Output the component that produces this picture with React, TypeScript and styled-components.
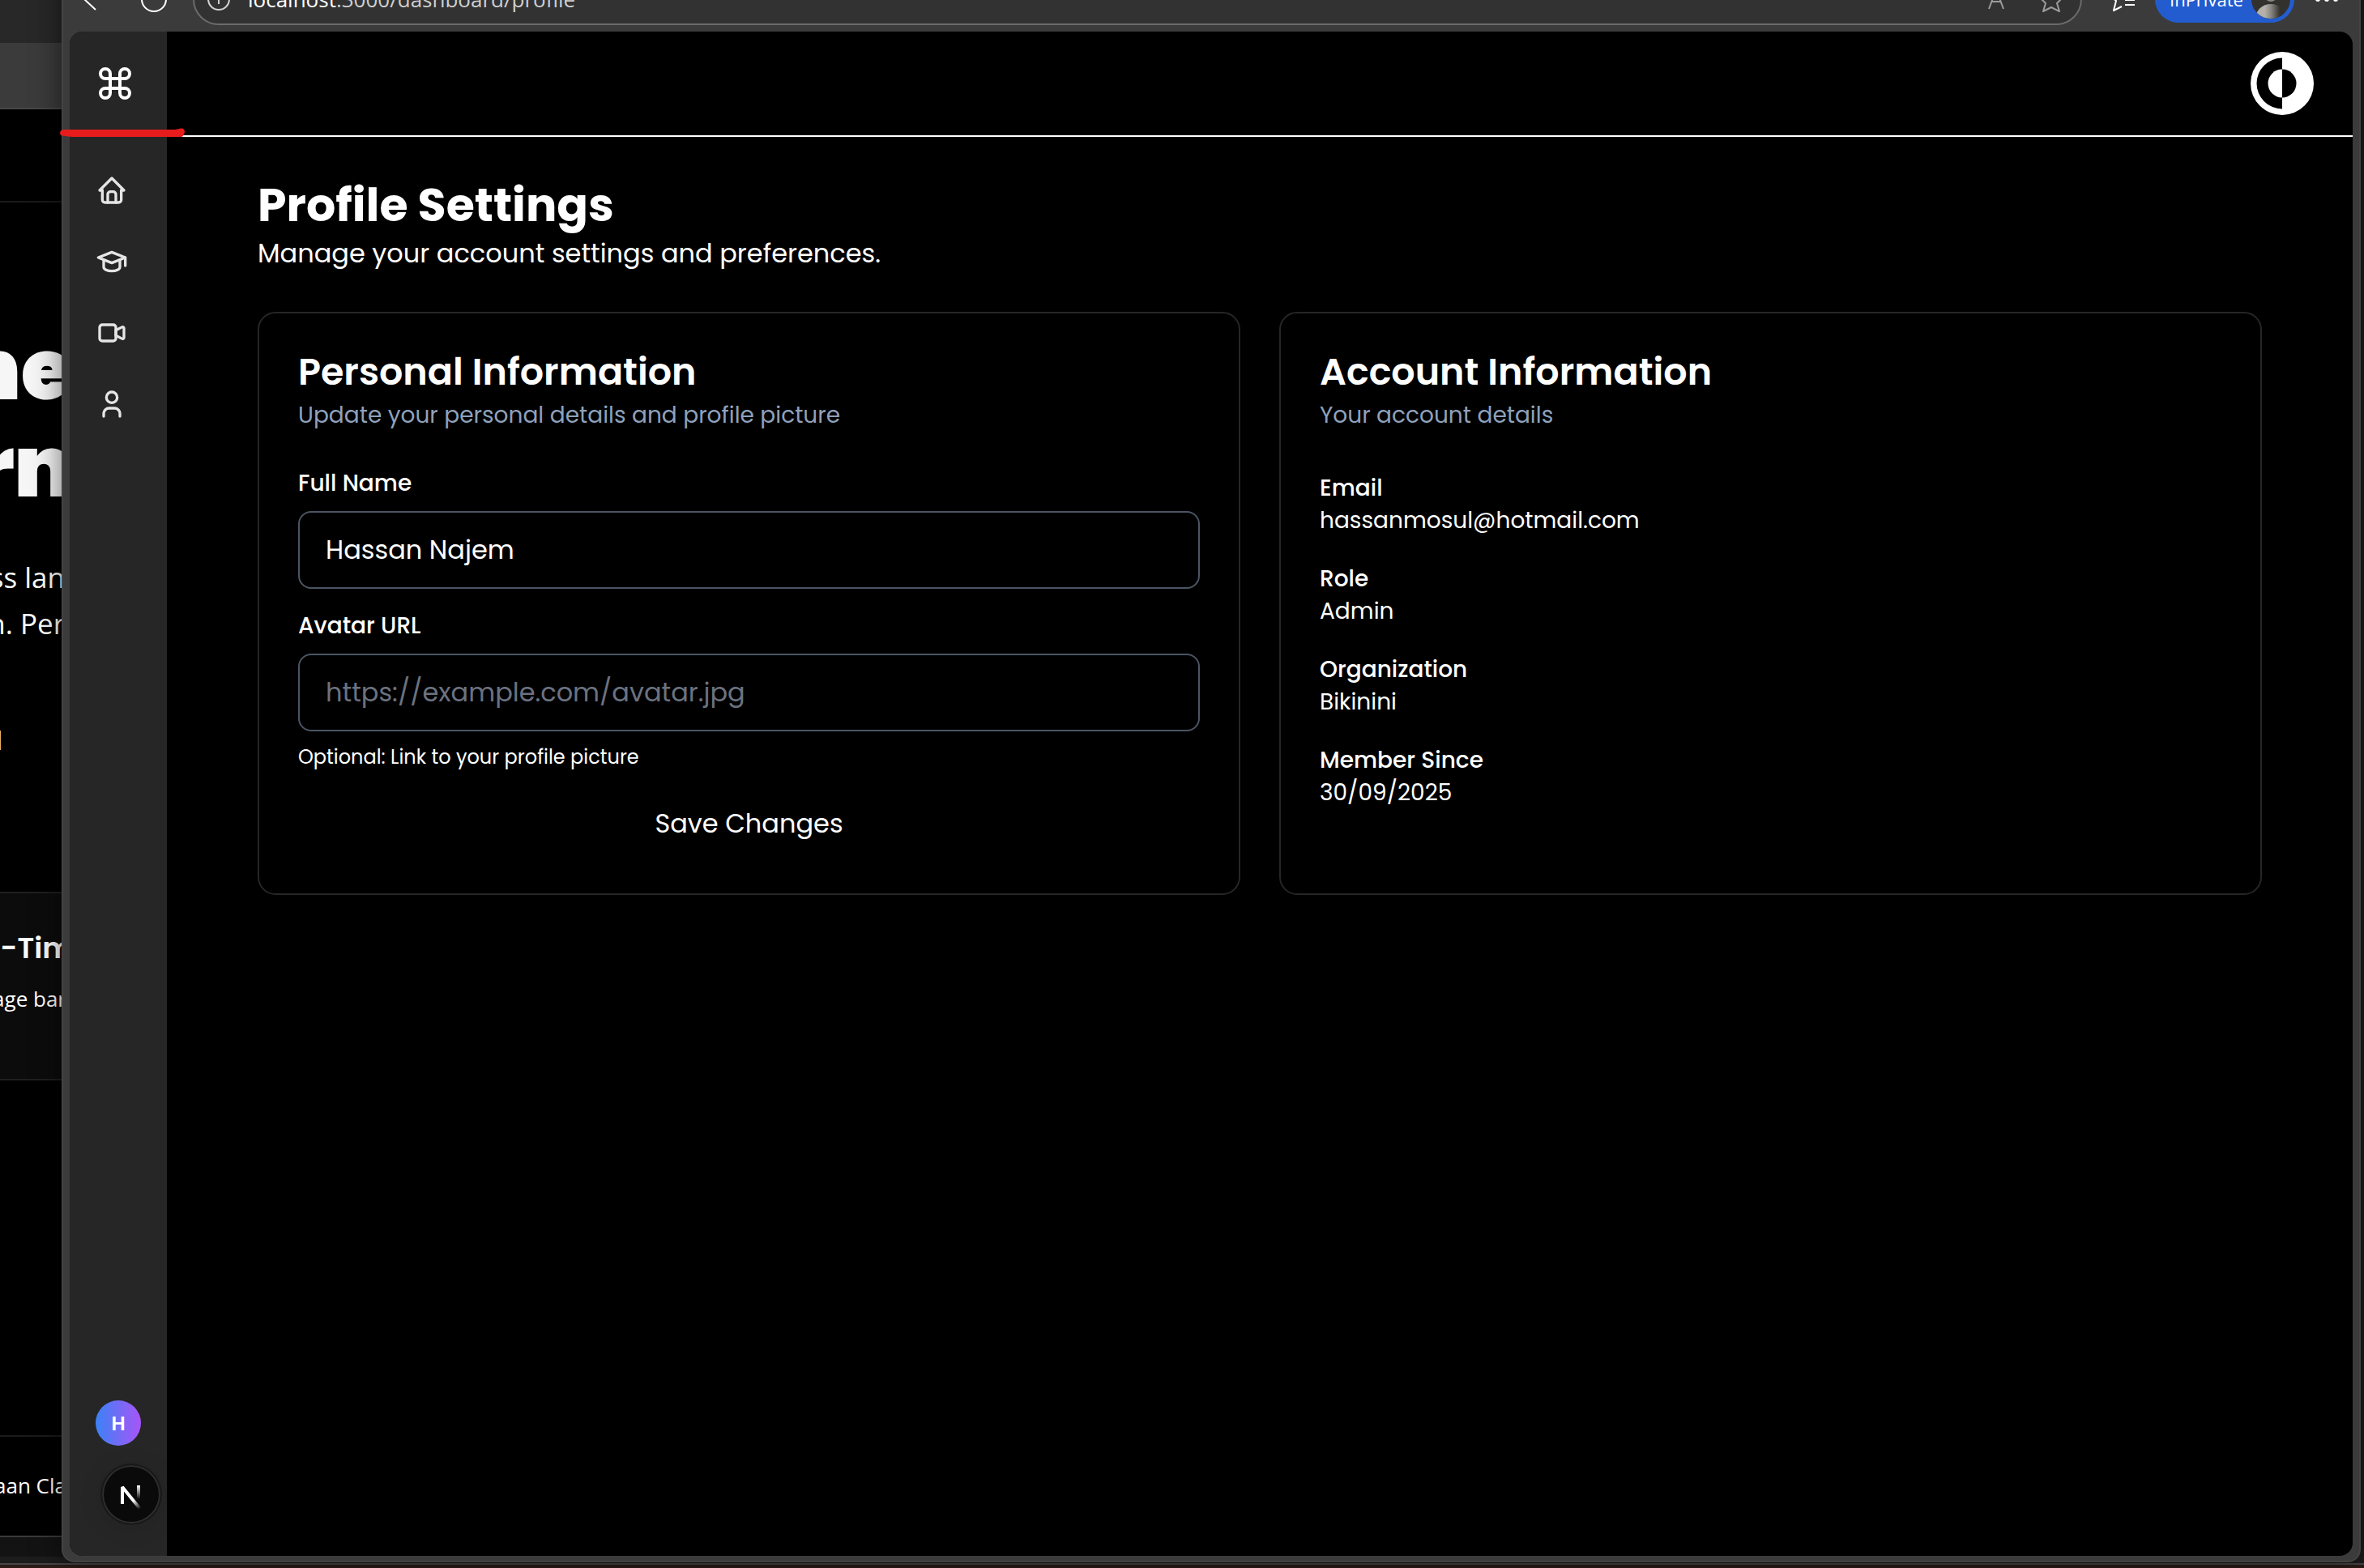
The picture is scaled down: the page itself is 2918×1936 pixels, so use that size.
import React, { useState } from "react";
import styled, { createGlobalStyle } from "styled-components";
import { Command } from "lucide-react";

const sans = `Poppins, Inter, "Open Sans", sans-serif`;
const system = `"Segoe UI", "Open Sans", "Noto Sans", sans-serif`;

const GlobalStyle = createGlobalStyle`
  *, *::before, *::after { box-sizing: border-box; }
  body { margin: 0; background: #1c1c1c; }
  h1, h2, h3, p, dl, dd, ul { margin: 0; padding: 0; }
  button, input { font: inherit; }
`;

const Desktop = styled.div`
  position: relative;
  height: 100vh;
  overflow: hidden;
  background: #1c1c1c;
  color: #fff;
  font-family: ${sans};
`;

const Taskbar = styled.div`
  position: absolute;
  left: 0;
  right: 0;
  bottom: 0;
  height: 6px;
  background: #2c1c17;
  border-top: 2px solid #474747;
`;

/* ---------- window behind ---------- */

const RearWindow = styled.section`
  position: absolute;
  top: 0;
  left: 0;
  bottom: 14px;
  width: 90px;
  overflow: hidden;
  display: flex;
  flex-direction: column;
  background: #131313;
`;

const RearTabs = styled.div`
  flex: none;
  height: 53px;
  background: #282828;
`;

const RearToolbar = styled.div`
  flex: none;
  height: 82px;
  background: #3b3b3b;
  border-bottom: 2px solid #474747;
`;

const RearPage = styled.div`
  flex: 1;
  margin-bottom: 24px;
  display: flex;
  flex-direction: column;
  background: #000;
  border-bottom: 2px solid #3a3a3a;
`;

const RearNav = styled.div`
  flex: none;
  height: 115px;
  border-bottom: 2px solid #1a1a1a;
`;

const RearLine = styled.p<{ $size: number; $line: number; $weight?: number; $inset?: number }>`
  display: flex;
  justify-content: flex-end;
  padding-right: ${(p) => p.$inset ?? 0}px;
  font-family: ${(p) => (p.$weight ? sans : system)};
  font-size: ${(p) => p.$size}px;
  font-weight: ${(p) => p.$weight ?? 400};
  line-height: ${(p) => p.$line}px;
  white-space: pre;
`;

const RearHeading = styled.div`
  padding: 147px 0 47px;
  color: #f6f6f6;
`;

const RearAccent = styled.div`
  width: 1px;
  height: 24px;
  margin-top: 104px;
  background: #e8b060;
`;

const RearCard = styled.div`
  flex: none;
  height: 233px;
  margin-top: 175px;
  padding-top: 44px;
  display: flex;
  flex-direction: column;
  gap: 18px;
  background: #0c0c0c;
  border: 2px solid #1f1f1f;
  border-width: 2px 0;
`;

const RearFooter = styled.div`
  margin-top: auto;
  height: 124px;
  padding-top: 40px;
  border-top: 2px solid #1a1a1a;
`;

/* ---------- browser window ---------- */

const Browser = styled.section`
  position: absolute;
  top: -41px;
  left: 76px;
  right: 4px;
  bottom: 7px;
  display: flex;
  flex-direction: column;
  padding: 0 8px 6px;
  background: #3b3b3b;
  border: 2px solid #434343;
  border-top: 0;
  border-radius: 0 0 16px 16px;
  box-shadow: 0 0 36px rgba(0, 0, 0, 0.55);
`;

const Toolbar = styled.header`
  flex: none;
  height: 80px;
  display: flex;
  align-items: center;
  gap: 20px;
  padding: 0 12px 0 4px;
`;

const ToolButton = styled.button`
  flex: none;
  display: flex;
  padding: 0;
  border: 0;
  background: none;
  color: #fff;
`;

const ToolGroup = styled.div<{ $gap: number }>`
  display: flex;
  gap: ${(p) => p.$gap}px;
`;

const AddressBar = styled.div`
  flex: 1;
  height: 64px;
  margin: 0 10px 0 8px;
  padding: 0 16px;
  display: flex;
  align-items: center;
  gap: 22px;
  background: #323232;
  border: 2px solid #6b6b6b;
  border-radius: 32px;
  color: #9c9c9c;
`;

const Address = styled.span`
  flex: 1;
  font-family: ${system};
  font-size: 26px;
  line-height: 36px;
  color: #cfcfcf;
  b { font-weight: 400; color: #fff; }
`;

const PrivateBadge = styled.button`
  flex: none;
  width: 172px;
  height: 58px;
  display: flex;
  align-items: center;
  justify-content: space-between;
  padding: 0 5px 0 18px;
  border: 0;
  border-radius: 29px;
  background: #235ccf;
  color: #fff;
  font-family: ${system};
  font-size: 22px;
`;

const Viewport = styled.div`
  flex: 1;
  min-height: 0;
  position: relative;
  display: flex;
  overflow: hidden;
  border-radius: 16px;
  background: #000;
`;

/* ---------- dashboard ---------- */

const Sidebar = styled.aside`
  flex: none;
  width: 120px;
  display: flex;
  flex-direction: column;
  align-items: flex-start;
  padding: 0 32px 136px;
  background: #262626;
`;

const Logo = styled.a`
  display: flex;
  align-items: center;
  height: 128px;
  color: #fff;
`;

const Nav = styled.nav`
  flex: 1;
  display: flex;
  flex-direction: column;
  margin-top: 24px;
`;

const NavLink = styled.a`
  display: flex;
  align-items: center;
  height: 88px;
  color: #e5e5e5;
`;

const Avatar = styled.button`
  width: 56px;
  height: 56px;
  padding: 0;
  border: 0;
  border-radius: 50%;
  background: linear-gradient(90deg, #3b82f6, #a855f7);
  color: #fff;
  font-size: 24px;
  font-weight: 600;
`;

const DevBadge = styled.button`
  position: absolute;
  left: 40px;
  bottom: 40px;
  width: 72px;
  height: 72px;
  padding: 0;
  display: flex;
  border: 0;
  border-radius: 50%;
  background: #0a0a0a;
  box-shadow: inset 0 0 0 2px #2e2e2e, 0 0 0 2px #191919, 0 4px 32px rgba(0, 0, 0, 0.12);
`;

const Main = styled.div`
  flex: 1;
  min-width: 0;
`;

const TopBar = styled.header`
  height: 130px;
  display: flex;
  align-items: center;
  justify-content: flex-end;
  padding: 0 48px;
  border-bottom: 2px solid #fff;
`;

const ThemeToggle = styled.button`
  display: flex;
  padding: 0;
  border: 0;
  background: none;
  color: #fff;
`;

const Content = styled.main`
  padding: 48px 112px;
`;

const PageTitle = styled.h1`
  font-size: 57px;
  font-weight: 700;
  line-height: 72px;
`;

const Lead = styled.p`
  font-size: 32px;
  line-height: 48px;
`;

const Cards = styled.div`
  display: grid;
  grid-template-columns: 1fr 1fr;
  gap: 48px;
  margin-top: 48px;
`;

const Card = styled.section`
  padding: 48px;
  border: 2px solid #262626;
  border-radius: 22px;
`;

const CardHeader = styled.header`
  display: flex;
  flex-direction: column;
  gap: 10px;
  margin-bottom: 44px;
`;

const CardTitle = styled.h2`
  font-size: 46px;
  font-weight: 600;
  line-height: 48px;
`;

const CardText = styled.p`
  font-size: 28px;
  line-height: 40px;
  color: #8fa1bb;
`;

const Form = styled.form`
  display: flex;
  flex-direction: column;
  gap: 26px;
`;

const Field = styled.div`
  display: flex;
  flex-direction: column;
  gap: 14px;
`;

const Label = styled.label`
  font-size: 28px;
  font-weight: 500;
  line-height: 40px;
`;

const Input = styled.input`
  width: 100%;
  height: 96px;
  padding: 0 32px;
  border: 2px solid #4b5563;
  border-radius: 16px;
  outline: 0;
  background: #000;
  color: #fff;
  font-size: 32px;
  &::placeholder { color: #6b7280; opacity: 1; }
`;

const Hint = styled.p`
  font-size: 24px;
  line-height: 36px;
`;

const Save = styled.button`
  height: 76px;
  padding: 0;
  border: 0;
  background: none;
  color: #fff;
  font-size: 32px;
`;

const Details = styled.dl`
  display: flex;
  flex-direction: column;
  gap: 32px;
  padding-top: 6px;
  font-size: 28px;
  line-height: 40px;
  dt { font-weight: 500; }
`;

/* ---------- annotation ---------- */

const Marker = styled.svg`
  position: absolute;
  left: 74px;
  top: 158px;
`;

const Outline = ({ children }: { children: React.ReactNode }) => (
  <svg width="40" height="40" viewBox="0 0 24 24" fill="none" stroke="currentColor" strokeWidth="2" strokeLinecap="round" strokeLinejoin="round">
    {children}
  </svg>
);

const nav = [
  {
    label: "Home",
    icon: (
      <>
        <path d="M5 12H3l9-9 9 9h-2" />
        <path d="M5 12v7a2 2 0 0 0 2 2h10a2 2 0 0 0 2-2v-7" />
        <path d="M9 21v-6a2 2 0 0 1 2-2h2a2 2 0 0 1 2 2v6" />
      </>
    ),
  },
  {
    label: "Courses",
    icon: (
      <>
        <path d="M22 9l-10-4-10 4 10 4 10-4v6" />
        <path d="M6 10.6V16a6 3 0 0 0 12 0v-5.4" />
      </>
    ),
  },
  {
    label: "Meetings",
    icon: (
      <>
        <path d="M15 10l4.553-2.276A1 1 0 0 1 21 8.618v6.764a1 1 0 0 1-1.447.894L15 14v-4z" />
        <rect x="3" y="6" width="12" height="12" rx="2" />
      </>
    ),
  },
  {
    label: "Profile",
    icon: (
      <>
        <circle cx="12" cy="7" r="4" />
        <path d="M6 21v-2a4 4 0 0 1 4-4h4a4 4 0 0 1 4 4v2" />
      </>
    ),
  },
];

const account = [
  ["Email", "hassanmosul@hotmail.com"],
  ["Role", "Admin"],
  ["Organization", "Bikinini"],
  ["Member Since", "30/09/2025"],
];

function RearBrowser() {
  return (
    <RearWindow>
      <RearTabs />
      <RearToolbar />
      <RearPage>
        <RearNav />
        <RearHeading>
          <RearLine $size={104} $line={120} $weight={900}>ne</RearLine>
          <RearLine $size={104} $line={120} $weight={900}>rn</RearLine>
        </RearHeading>
        <RearLine $size={35} $line={57} $inset={10}>ss lan</RearLine>
        <RearLine $size={35} $line={57} $inset={10}>n. Per</RearLine>
        <RearAccent />
        <RearCard>
          <RearLine $size={36} $line={48} $weight={600}>-Tim</RearLine>
          <RearLine $size={26} $line={40} $inset={8}>age bar</RearLine>
        </RearCard>
        <RearFooter>
          <RearLine $size={26} $line={40} $inset={8}>raan Cla</RearLine>
        </RearFooter>
      </RearPage>
    </RearWindow>
  );
}

function BrowserToolbar() {
  return (
    <Toolbar>
      <ToolGroup $gap={40}>
        <ToolButton aria-label="Back">
          <svg width="40" height="40" viewBox="0 0 40 40" fill="none" stroke="currentColor" strokeWidth="2">
            <path d="M28 33L14 20 28 7M14 20h24" />
          </svg>
        </ToolButton>
        <ToolButton aria-label="Refresh">
          <svg width="40" height="40" viewBox="0 0 40 40" fill="none" stroke="currentColor" strokeWidth="2">
            <circle cx="20" cy="20" r="15" />
          </svg>
        </ToolButton>
      </ToolGroup>
      <AddressBar>
        <svg width="28" height="28" viewBox="0 0 28 28" fill="none" stroke="#cfcfcf" strokeWidth="2">
          <circle cx="14" cy="14" r="13" />
          <path d="M14 12v8M14 7v2" />
        </svg>
        <Address><b>localhost</b>:3000/dashboard/profile</Address>
        <ToolGroup $gap={28}>
          <ToolButton aria-label="Read aloud">
            <svg width="40" height="40" viewBox="0 0 40 40" fill="none" stroke="#9c9c9c" strokeWidth="2">
              <path d="M11 32L20 8l9 24M14 23h12" />
            </svg>
          </ToolButton>
          <ToolButton aria-label="Add to favourites">
            <svg width="40" height="40" viewBox="0 0 40 40" fill="none" stroke="#9c9c9c" strokeWidth="2" strokeLinejoin="round">
              <path d="M20 8l4 9 10 1-7 7 3 10-10-5-10 5 3-10-7-7 10-1z" />
            </svg>
          </ToolButton>
        </ToolGroup>
      </AddressBar>
      <ToolButton aria-label="Favourites">
        <svg width="40" height="40" viewBox="0 0 40 40" fill="none" stroke="currentColor" strokeWidth="2" strokeLinejoin="round">
          <path d="M19 29l-10 5 3-12-8-7 11-1 4-9 4 9h10" />
          <path d="M23 21h12M23 27h12" />
        </svg>
      </ToolButton>
      <PrivateBadge>
        InPrivate
        <svg width="48" height="48" viewBox="0 0 48 48">
          <defs>
            <linearGradient id="coat"><stop offset="0.3" stopColor="#b5b0aa" /><stop offset="0.5" stopColor="#8a8782" /><stop offset="0.8" stopColor="#33312d" /></linearGradient>
            <clipPath id="disc"><circle cx="24" cy="24" r="24" /></clipPath>
          </defs>
          <g clipPath="url(#disc)">
            <rect width="48" height="48" fill="#33312d" />
            <circle cx="24" cy="19" r="8" fill="#8a8782" />
            <ellipse cx="24" cy="48" rx="19" ry="18" fill="url(#coat)" />
          </g>
        </svg>
      </PrivateBadge>
      <ToolButton aria-label="Settings and more">
        <svg width="40" height="40" viewBox="0 0 40 40" fill="currentColor">
          <circle cx="9" cy="20" r="3" /><circle cx="20" cy="20" r="3" /><circle cx="31" cy="20" r="3" />
        </svg>
      </ToolButton>
    </Toolbar>
  );
}

export default function App() {
  const [name, setName] = useState("Hassan Najem");
  const [url, setUrl] = useState("");
  return (
    <Desktop>
      <GlobalStyle />
      <Taskbar />
      <RearBrowser />
      <Browser>
        <BrowserToolbar />
        <Viewport>
          <Sidebar>
            <Logo href="#" aria-label="Dashboard"><Command size={48} /></Logo>
            <Nav>
              {nav.map((n) => (
                <NavLink key={n.label} href="#" aria-label={n.label}><Outline>{n.icon}</Outline></NavLink>
              ))}
            </Nav>
            <Avatar>H</Avatar>
          </Sidebar>
          <Main>
            <TopBar>
              <ThemeToggle aria-label="Toggle theme">
                <svg width="78" height="78" viewBox="0 0 78 78" fill="currentColor">
                  <circle cx="39" cy="39" r="39" />
                  <path d="M39 7.5a31.5 31.5 0 0 0 0 63z" fill="#000" />
                  <circle cx="39" cy="39" r="17.5" fill="#000" />
                  <path d="M39 21.5a17.5 17.5 0 0 0 0 35z" />
                </svg>
              </ThemeToggle>
            </TopBar>
            <Content>
              <PageTitle>Profile Settings</PageTitle>
              <Lead>Manage your account settings and preferences.</Lead>
              <Cards>
                <Card>
                  <CardHeader>
                    <CardTitle>Personal Information</CardTitle>
                    <CardText>Update your personal details and profile picture</CardText>
                  </CardHeader>
                  <Form onSubmit={(e) => e.preventDefault()}>
                    <Field>
                      <Label htmlFor="name">Full Name</Label>
                      <Input id="name" value={name} onChange={(e) => setName(e.target.value)} />
                    </Field>
                    <Field>
                      <Label htmlFor="avatar">Avatar URL</Label>
                      <Input id="avatar" value={url} placeholder="https://example.com/avatar.jpg" onChange={(e) => setUrl(e.target.value)} />
                      <Hint>Optional: Link to your profile picture</Hint>
                    </Field>
                    <Save type="submit">Save Changes</Save>
                  </Form>
                </Card>
                <Card>
                  <CardHeader>
                    <CardTitle>Account Information</CardTitle>
                    <CardText>Your account details</CardText>
                  </CardHeader>
                  <Details>
                    {account.map(([term, value]) => (
                      <div key={term}><dt>{term}</dt><dd>{value}</dd></div>
                    ))}
                  </Details>
                </Card>
              </Cards>
            </Content>
          </Main>
          <DevBadge aria-label="Open developer tools">
            <svg width="72" height="72" viewBox="0 0 72 72" fill="none" strokeWidth="4">
              <defs>
                <linearGradient id="diag" gradientUnits="userSpaceOnUse" x1="36" y1="38" x2="48" y2="53"><stop offset="0.3" stopColor="#fff" /><stop offset="1" stopColor="#0a0a0a" /></linearGradient>
                <linearGradient id="stem" gradientUnits="userSpaceOnUse" x1="45" y1="25" x2="45" y2="42"><stop stopColor="#fff" /><stop offset="1" stopColor="#0a0a0a" /></linearGradient>
              </defs>
              <path d="M45 25v17" stroke="url(#stem)" />
              <path d="M25 48V27L47 54" stroke="url(#diag)" strokeLinejoin="bevel" />
            </svg>
          </DevBadge>
        </Viewport>
      </Browser>
      <Marker width="154" height="12" viewBox="0 0 154 12" fill="#e81c1c">
        <path d="M4 2h138c3 0 6-2 9-1.500 3 1 3.500 4 2.500 6-1 2-1 4-3.500 4.500-35 0-95 0-128 0-7 0-13-.5-19-1.500C-1 9.500-1 2.500 4 2z" />
      </Marker>
    </Desktop>
  );
}
